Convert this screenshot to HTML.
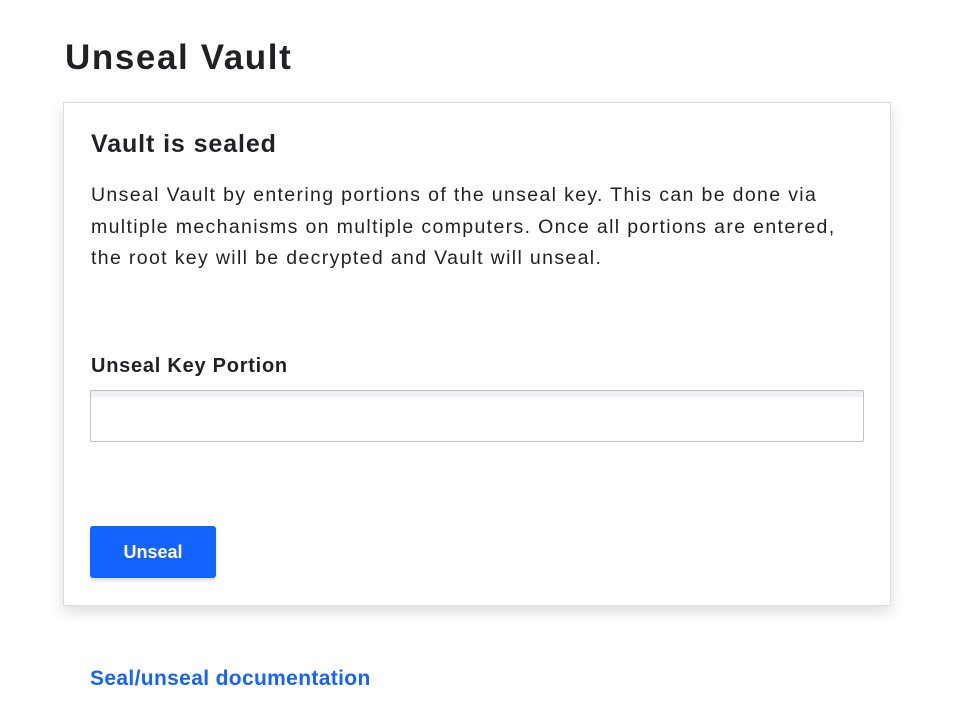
<!DOCTYPE html>
<html><head><style>
body{margin:0;background:#fff;font-family:"Liberation Sans",sans-serif;color:#1f2124;width:969px;height:726px;overflow:hidden;position:relative}
h1{position:absolute;left:65px;top:38px;margin:0;font-size:35px;font-weight:bold;letter-spacing:1.6px}
.card{position:absolute;left:63px;top:102px;width:826px;height:502px;border:1px solid #dcdde0;box-shadow:0 6px 14px rgba(0,0,0,.14);background:#fff}
h2{position:absolute;left:27px;top:27px;margin:0;font-size:25px;font-weight:bold;letter-spacing:0.9px}
p{position:absolute;left:27px;top:77px;width:790px;margin:0;font-size:19.5px;line-height:31.5px;color:#1f2124;letter-spacing:1.35px;white-space:nowrap}
label{position:absolute;left:27px;top:252px;font-size:20px;font-weight:bold;letter-spacing:0.75px}
.inp{position:absolute;left:26px;top:287px;width:772px;height:50px;border:1px solid #babfc9;border-radius:2px;box-shadow:inset 0 6px 0 #f0f1f4;background:#fff}
.btn{position:absolute;left:26px;top:423px;width:126px;height:52px;background:#1563ff;border-radius:3px;color:#fff;font-weight:bold;font-size:18px;text-align:center;line-height:52px;box-shadow:0 3px 3px rgba(0,0,0,.12)}
a{position:absolute;left:90px;top:667px;color:#1563ff;font-size:21px;font-weight:bold;text-decoration:none;letter-spacing:0.35px}
</style></head><body>
<h1>Unseal Vault</h1>
<div class="card">
<h2>Vault is sealed</h2>
<p>Unseal Vault by entering portions of the unseal key. This can be done via<br>multiple mechanisms on multiple computers. Once all portions are entered,<br>the root key will be decrypted and Vault will unseal.</p>
<label>Unseal Key Portion</label>
<div class="inp"></div>
<div class="btn">Unseal</div>
</div>
<a href="#">Seal/unseal documentation</a>
</body></html>
